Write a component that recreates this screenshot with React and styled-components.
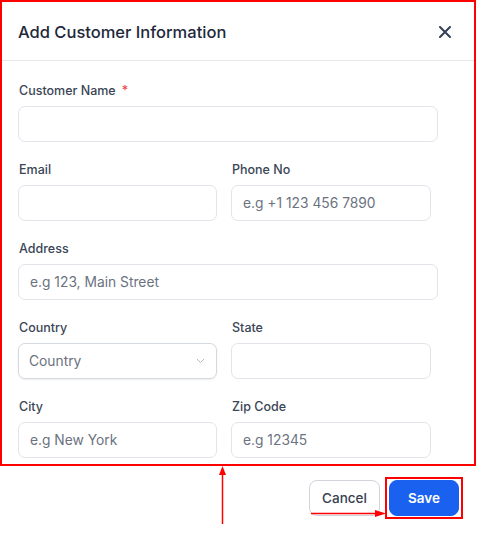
import React from 'react';
import styled, { createGlobalStyle } from 'styled-components';

const GlobalStyle = createGlobalStyle`
  body {
    margin: 0;
    background: #ffffff;
    font-family: Inter, "Noto Sans", sans-serif;
  }
  * { box-sizing: border-box; }
`;

const Page = styled.div`
  position: relative;
  width: 479px;
  height: 534px;
  background: #fff;
`;

const Modal = styled.div`
  width: 476px;
  height: 466px;
  border: 2px solid #ff0000;
  overflow: hidden;
  background: #fff;
`;

const Header = styled.div`
  height: 59px;
  display: flex;
  align-items: center;
  justify-content: space-between;
  padding: 2px 22px 0 16px;
  border-bottom: 1px solid #e5e7eb;
`;

const Title = styled.h2`
  margin: 0;
  font-size: 16.5px;
  font-weight: 500;
  color: #1e293b;
`;

const CloseButton = styled.button`
  border: none;
  background: none;
  padding: 0;
  width: 14px;
  height: 14px;
  display: flex;
  align-items: center;
  justify-content: center;
  cursor: pointer;
`;

const Body = styled.div`
  padding: 22px 16px 0;
  display: flex;
  flex-direction: column;
  gap: 20px;
`;

const Row = styled.div`
  display: grid;
  grid-template-columns: ${(p) => (p.$split ? '199px 200px' : '420px')};
  column-gap: 14px;
`;

const Field = styled.div`
  display: flex;
  flex-direction: column;
`;

const Label = styled.label`
  font-size: 12.5px;
  line-height: 16px;
  font-weight: 500;
  color: #3a4556;
  margin-bottom: 7px;
  padding-left: 1px;
`;

const Required = styled.span`
  color: #ef4444;
  margin-left: 6px;
`;

const Input = styled.input`
  height: 36px;
  width: 100%;
  border: 1px solid #e2e4ea;
  border-radius: 7px;
  padding: 0 11px;
  font-family: Inter, "Noto Sans", sans-serif;
  font-size: 13.8px;
  color: #1e293b;
  background: #fff;
  outline: none;
  &::placeholder {
    color: #6b7280;
  }
`;

const SelectBox = styled.div`
  height: 36px;
  width: 100%;
  border: 1px solid #d4d8e0;
  border-radius: 7px;
  padding: 0 11px 0 10px;
  display: flex;
  align-items: center;
  justify-content: space-between;
  font-size: 13.8px;
  color: #6b7280;
  box-shadow: 0 1px 2px rgba(15, 23, 42, 0.08);
`;

const Footer = styled.div`
  display: flex;
  justify-content: flex-end;
  align-items: center;
  gap: 5px;
  margin-top: 11px;
  padding-right: 16px;
`;

const Button = styled.button`
  height: 36px;
  border-radius: 8px;
  font-family: Inter, "Noto Sans", sans-serif;
  font-size: 13.5px;
  cursor: pointer;
  border: 1px solid ${(p) => (p.$primary ? '#1a61f0' : '#d1d5db')};
  background: ${(p) => (p.$primary ? '#1a61f0' : '#ffffff')};
  color: ${(p) => (p.$primary ? '#ffffff' : '#374151')};
  font-weight: ${(p) => (p.$primary ? 600 : 500)};
  width: ${(p) => (p.$primary ? '70px' : '71px')};
`;

const Highlight = styled.div`
  border: 2px solid #ff0000;
  padding: 1px 2px;
  display: flex;
`;

const Annotations = styled.svg`
  position: absolute;
  left: 0;
  top: 0;
  pointer-events: none;
`;

const App = () => {
  return (
    <Page>
      <GlobalStyle />
      <Modal>
        <Header>
          <Title>Add Customer Information</Title>
          <CloseButton aria-label="Close">
            <svg width="12" height="12" viewBox="0 0 12 12">
              <path d="M1 1L11 11M11 1L1 11" stroke="#334155" strokeWidth="2" strokeLinecap="round" />
            </svg>
          </CloseButton>
        </Header>
        <Body>
          <Row>
            <Field>
              <Label>
                Customer Name<Required>*</Required>
              </Label>
              <Input type="text" />
            </Field>
          </Row>
          <Row $split>
            <Field>
              <Label>Email</Label>
              <Input type="email" />
            </Field>
            <Field>
              <Label>Phone No</Label>
              <Input type="text" placeholder="e.g +1 123 456 7890" />
            </Field>
          </Row>
          <Row>
            <Field>
              <Label>Address</Label>
              <Input type="text" placeholder="e.g 123, Main Street" />
            </Field>
          </Row>
          <Row $split>
            <Field>
              <Label>Country</Label>
              <SelectBox>
                Country
                <svg width="9" height="6" viewBox="0 0 9 6">
                  <path d="M1 1L4.5 4.5L8 1" stroke="#b4bac4" strokeWidth="1" fill="none" />
                </svg>
              </SelectBox>
            </Field>
            <Field>
              <Label>State</Label>
              <Input type="text" />
            </Field>
          </Row>
          <Row $split>
            <Field>
              <Label>City</Label>
              <Input type="text" placeholder="e.g New York" />
            </Field>
            <Field>
              <Label>Zip Code</Label>
              <Input type="text" placeholder="e.g 12345" />
            </Field>
          </Row>
        </Body>
      </Modal>
      <Footer>
        <Button>Cancel</Button>
        <Highlight>
          <Button $primary>Save</Button>
        </Highlight>
      </Footer>
      <Annotations width="479" height="534" viewBox="0 0 479 534">
        <line x1="222.5" y1="474" x2="222.5" y2="524" stroke="#ff0000" strokeWidth="1.5" />
        <polygon points="222.5,466 219,475 226,475" fill="#ff0000" />
        <line x1="311" y1="513.5" x2="376" y2="513.5" stroke="#ff0000" strokeWidth="1.5" />
        <polygon points="386,513.5 375,510 375,517" fill="#ff0000" />
      </Annotations>
    </Page>
  );
};

export default App;
